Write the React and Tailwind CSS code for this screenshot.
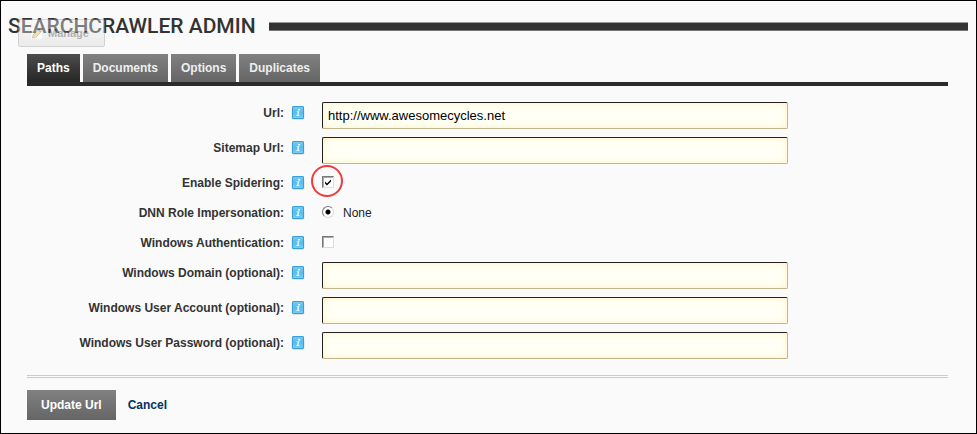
import { useState } from "react";

const TABS = ["Paths", "Documents", "Options", "Duplicates"];

function InfoIcon() {
  return (
    <svg width="14" height="16" viewBox="0 0 14 16" className="-mx-px shrink-0" aria-hidden="true">
      <defs>
        <linearGradient id="info" x1="0" y1="0" x2="0" y2="1">
          <stop offset="0" stopColor="#7cc9ee" />
          <stop offset="0.5" stopColor="#55bdf0" />
          <stop offset="1" stopColor="#74d0f8" />
        </linearGradient>
      </defs>
      <rect x="0.5" y="3" width="13" height="12" rx="2" fill="#000" opacity="0.1" />
      <rect x="1.5" y="1.5" width="11" height="12" rx="0.5" fill="url(#info)" stroke="#3a9fd5" />
      <path d="M7.3 4h1.9l-.3 1.500H7z" fill="#fff" />
      <path d="M5.700 6.300h2.800l-.9 3.700h.9l-.2 1H5.200l.2-1h.6l.7-2.700h-1z" fill="#dff3fc" />
    </svg>
  );
}

function Row({ label, id, tall, children }) {
  return (
    <div className={"flex items-start " + (tall ? "h-[27px]" : "h-[22px]")}>
      <label htmlFor={id} className="w-[257px] shrink-0 pt-1 text-right text-[12px] leading-[14px] font-bold text-[#333]">
        {label}
      </label>
      <span className="ml-2 w-[30px] shrink-0 pt-[3px]">
        <InfoIcon />
      </span>
      {children}
    </div>
  );
}

function TextRow({ label, id, value = "" }) {
  return (
    <Row label={label} id={id} tall>
      <input
        id={id}
        type="text"
        defaultValue={value}
        className="h-[27px] w-[466px] min-w-0 rounded-[2px] border border-t-[#222] border-r-[#bfb68c] border-b-[#bfb68c] border-l-[#222] bg-[#fffff5] px-[5px] text-[13px] text-black shadow-[inset_0_0_7px_#fff0c0] outline-none"
      />
    </Row>
  );
}

const BOX =
  "block size-3 appearance-none border border-t-[#777] border-r-[#ddd] border-b-[#ddd] border-l-[#777] bg-white shadow-[inset_1px_1px_0_#aaa]";

function Check({ id, on }) {
  const [checked, setChecked] = useState(on);
  return (
    <span className="relative mt-1 block size-3">
      <input id={id} type="checkbox" checked={checked} onChange={(e) => setChecked(e.target.checked)} className={BOX} />
      {checked && (
        <svg viewBox="0 0 12 12" className="pointer-events-none absolute inset-0 size-3" aria-hidden="true">
          <path d="M3 5.500v2L5 9.500l4-4v-2L5 7.500z" fill="#000" />
        </svg>
      )}
      {on && (
        <span className="pointer-events-none absolute -top-[11px] -left-[11px] size-8 rounded-full border-2 border-[#f23a3c]" />
      )}
    </span>
  );
}

export default function App() {
  const [tab, setTab] = useState("Paths");
  return (
    <main className="min-h-screen border border-black bg-[#fafafa] pb-[13px] font-['Liberation_Sans',Arial,sans-serif]">
      <header className="relative flex items-center pt-3 pr-2 pl-[7px]">
        <h1 className="font-[Roboto,sans-serif] text-[21px] leading-[26px] font-medium whitespace-nowrap text-[#333]">
          SEARCHCRAWLER ADMIN
        </h1>
        <div className="ml-[13px] h-[9px] grow border-t border-b border-t-[#999] border-b-[#777] bg-[#333]" />
        <button
          type="button"
          className="absolute top-[18px] left-[17px] flex h-7 w-[87px] items-center gap-[5px] rounded-[2px] border border-[#999] bg-linear-to-b from-[#f7f7f7] to-[#d4d4d4] pl-[11px] text-[11px] font-bold text-[#444] opacity-40"
        >
          <svg width="13" height="13" viewBox="0 0 13 13" aria-hidden="true">
            <rect x="0.5" y="0.5" width="12" height="12" fill="#fff" stroke="#ddd" />
            <path d="m3 8 5-5 2.5 2.5-5 5L2.5 11z" fill="#e8b84a" stroke="#8a6a30" strokeWidth="0.8" />
            <path d="m8 3 1.200-1L12 4.500l-1.500 1z" fill="#666" />
          </svg>
          Manage
        </button>
      </header>

      <div className="mt-[15px] pr-7 pl-[26px]">
        <nav className="flex gap-[3px] border-b-4 border-[#2b2b2b]" role="tablist">
          {TABS.map((name) => (
            <button
              key={name}
              type="button"
              role="tab"
              aria-selected={tab === name}
              onClick={() => setTab(name)}
              className={
                "h-7 bg-linear-to-b px-[10px] text-[12px] font-bold " +
                (tab === name ? "from-[#4c4c4c] to-[#272727] text-white" : "from-[#818181] to-[#656565] text-[#eee]")
              }
            >
              {name}
            </button>
          ))}
        </nav>

        <form onSubmit={(e) => e.preventDefault()}>
          <div className="flex flex-col gap-2 pt-4">
            <TextRow label="Url:" id="url" value="http://www.awesomecycles.net" />
            <TextRow label="Sitemap Url:" id="sitemap" />
            <Row label="Enable Spidering:" id="spider">
              <Check id="spider" on={true} />
            </Row>
            <Row label="DNN Role Impersonation:" id="role">
              <input
                id="role"
                type="radio"
                name="role"
                defaultChecked
                className="mt-1 size-3 appearance-none rounded-full border border-t-[#777] border-r-[#ddd] border-b-[#ddd] border-l-[#777] bg-white checked:bg-[radial-gradient(circle,#000_0_2px,#fff_3px)]"
              />
              <label htmlFor="role" className="pt-1 pl-[9px] text-[12px] leading-[14px] text-[#222]">
                None
              </label>
            </Row>
            <Row label="Windows Authentication:" id="winauth">
              <Check id="winauth" on={false} />
            </Row>
            <TextRow label="Windows Domain (optional):" id="domain" />
            <TextRow label="Windows User Account (optional):" id="account" />
            <TextRow label="Windows User Password (optional):" id="password" />
          </div>
          <div className="mt-4 h-[3px] border-t border-b border-[#ccc]" />
          <div className="mt-3 flex items-center gap-3">
            <button type="submit" className="h-[30px] bg-linear-to-b from-[#818181] to-[#656565] px-[14px] text-[12px] font-bold text-white">
              Update Url
            </button>
            <a href="#cancel" className="text-[12px] font-bold text-[#003366]">
              Cancel
            </a>
          </div>
        </form>
      </div>
    </main>
  );
}
